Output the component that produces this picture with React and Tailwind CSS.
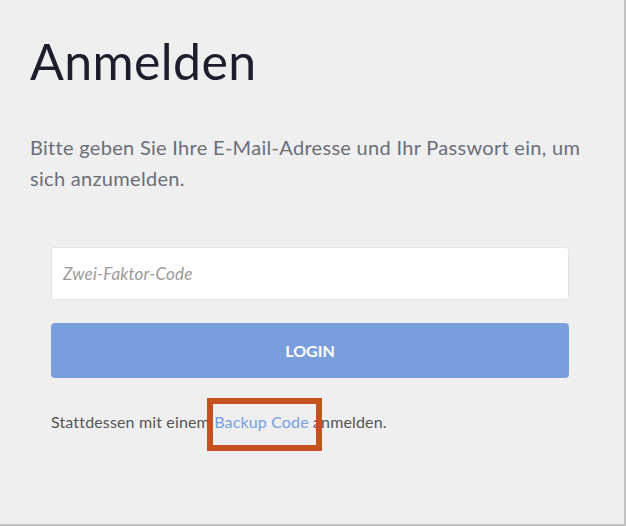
export default function App() {
  return (
    <div className="w-[626px] h-[526px] bg-[#efefef] border-r-2 border-b-2 border-[#c2c2c2] overflow-hidden font-['Lato',_sans-serif]">
      <div className="w-[560px] ml-[30px] pt-[31px]">
        <h1 className="text-[50px] leading-[1.2] font-normal tracking-[0.4px] text-[#1c1f2b]">Anmelden</h1>

        <p className="mt-[41px] text-[20px] leading-[31px] tracking-[0.3px] text-[#6b6e77]">
          Bitte geben Sie Ihre E-Mail-Adresse und Ihr Passwort ein, um sich anzumelden.
        </p>

        {/* 2FA form */}
        <div className="px-[21px] mt-[53px]">
          <input
            type="text"
            placeholder="Zwei-Faktor-Code"
            className="block w-full h-[53px] bg-white border border-[#e1e4e8] rounded-[3px] px-[11px] text-[17px] tracking-[0.2px] italic text-[#333] placeholder:text-[#9a9a9a] outline-none"
          />
          <button
            type="button"
            className="mt-[23px] w-full h-[55px] rounded-[4px] bg-[#789fdc] text-white text-[16px] font-bold"
          >
            LOGIN
          </button>
          <div className="relative mt-[32px] text-[16px] leading-[24px] tracking-[0.15px] text-[#555]">
            Stattdessen mit einem <span className="text-[#74a0e2]">Backup Code</span> anmelden.
            {/* annotation */}
            <div className="absolute left-[156px] top-[-12px] w-[115px] h-[53px] border-[6px] border-[#c4511f]" />
          </div>
        </div>
      </div>
    </div>
  );
}
